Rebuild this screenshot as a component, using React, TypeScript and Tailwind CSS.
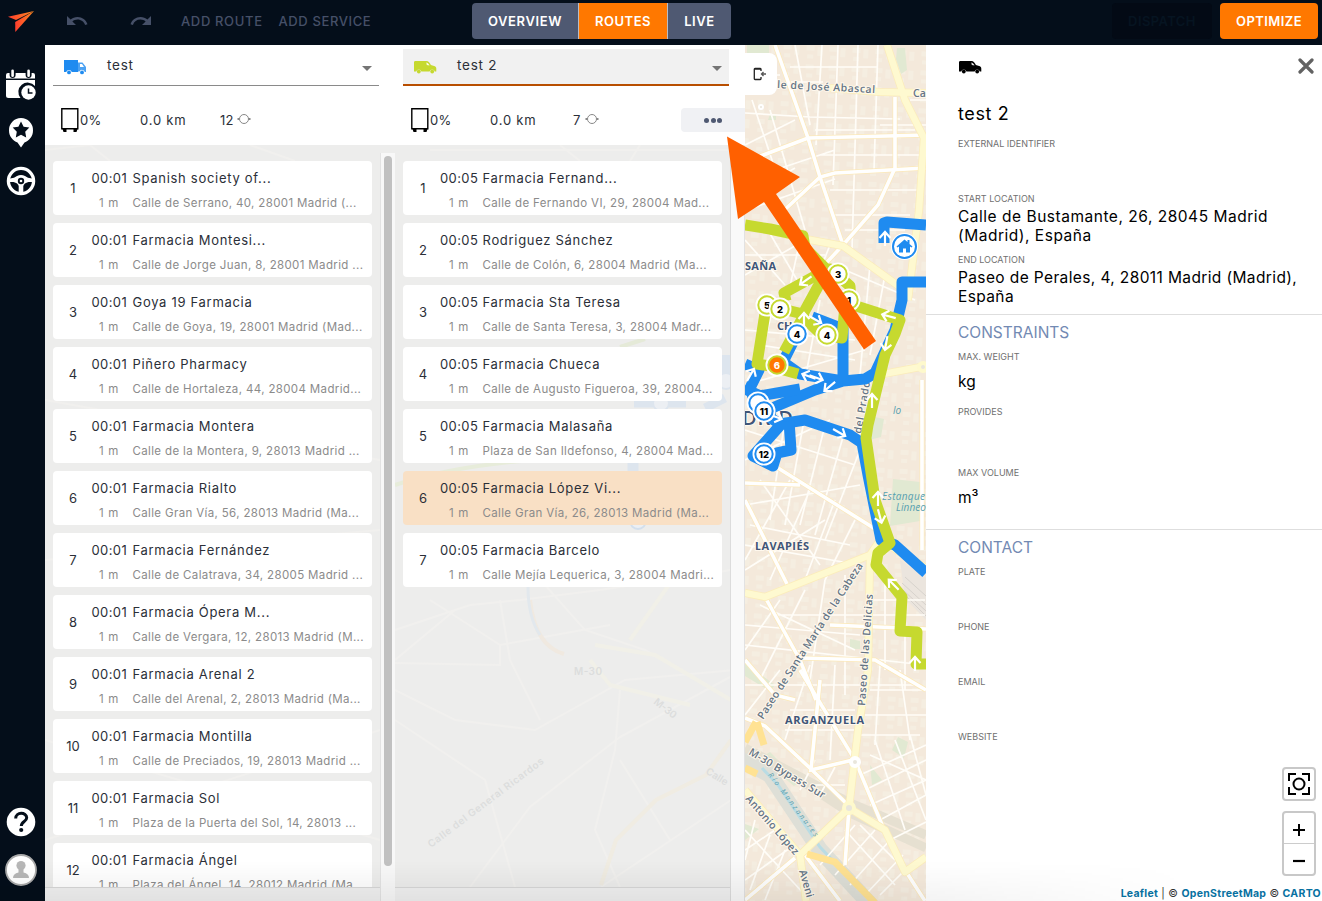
import React from "react";
import { MdUndo, MdRedo } from "react-icons/md";

type Stop = { name: string; address: string };

const firstRoute: Stop[] = [
  { name: "Spanish society of...", address: "Calle de Serrano, 40, 28001 Madrid (..." },
  { name: "Farmacia Montesi...", address: "Calle de Jorge Juan, 8, 28001 Madrid ..." },
  { name: "Goya 19 Farmacia", address: "Calle de Goya, 19, 28001 Madrid (Mad..." },
  { name: "Piñero Pharmacy", address: "Calle de Hortaleza, 44, 28004 Madrid..." },
  { name: "Farmacia Montera", address: "Calle de la Montera, 9, 28013 Madrid ..." },
  { name: "Farmacia Rialto", address: "Calle Gran Vía, 56, 28013 Madrid (Ma..." },
  { name: "Farmacia Fernández", address: "Calle de Calatrava, 34, 28005 Madrid ..." },
  { name: "Farmacia Ópera M...", address: "Calle de Vergara, 12, 28013 Madrid (M..." },
  { name: "Farmacia Arenal 2", address: "Calle del Arenal, 2, 28013 Madrid (Ma..." },
  { name: "Farmacia Montilla", address: "Calle de Preciados, 19, 28013 Madrid ..." },
  { name: "Farmacia Sol", address: "Plaza de la Puerta del Sol, 14, 28013 ..." },
  { name: "Farmacia Ángel", address: "Plaza del Ángel, 14, 28012 Madrid (Ma..." },
];

const secondRoute: Stop[] = [
  { name: "Farmacia Fernand...", address: "Calle de Fernando VI, 29, 28004 Mad..." },
  { name: "Rodriguez Sánchez", address: "Calle de Colón, 6, 28004 Madrid (Ma..." },
  { name: "Farmacia Sta Teresa", address: "Calle de Santa Teresa, 3, 28004 Madr..." },
  { name: "Farmacia Chueca", address: "Calle de Augusto Figueroa, 39, 28004..." },
  { name: "Farmacia Malasaña", address: "Plaza de San Ildefonso, 4, 28004 Mad..." },
  { name: "Farmacia López Vi...", address: "Calle Gran Vía, 26, 28013 Madrid (Ma..." },
  { name: "Farmacia Barcelo", address: "Calle Mejía Lequerica, 3, 28004 Madri..." },
];

function Truck() {
  return (
    <svg width="23" height="15" viewBox="0 0 23 15" className="block text-[#1f8bf0]">
      <path fill="currentColor" d="M0 0h14v12H7.800a3 3 0 0 0-5.600 0H0z" />
      <path fill="currentColor" opacity=".8" d="M14 2.500h4.500L22 7v5h-1.200a2.900 2.900 0 0 0-5.400-.5H14z" />
      <path fill="#fff" d="M16 4h2l2 3h-4z" />
      <circle cx="5" cy="12.400" r="1.900" fill="currentColor" />
      <circle cx="18" cy="12.400" r="1.900" fill="currentColor" />
    </svg>
  );
}

function Van({ className }: { className: string }) {
  return (
    <svg width="23" height="13" viewBox="0 0 23 13" className={className}>
      <path fill="currentColor" d="M0 .8 1 0h11.500c2 0 3.300 2.100 4.400 4l4 1.300c1 .5 1.400 1.200 1.400 2.400V10.500h-1.500a2.700 2.700 0 0 0-5.200 0H7.400a2.700 2.700 0 0 0-5.200 0H0z" />
      <path fill="#fff" d="M12.300 1.400c1.700.2 2.700 1.800 3.200 3l-2.700-.4z" opacity=".9" />
      <circle cx="4.800" cy="10.500" r="1.900" fill="currentColor" />
      <circle cx="18.200" cy="10.500" r="1.900" fill="currentColor" />
    </svg>
  );
}

function Sidebar() {
  return (
    <aside className="flex w-[45px] shrink-0 flex-col bg-[#040e1a]">
      <svg width="45" height="210" viewBox="0 0 45 210">
        <defs>
          <linearGradient id="brand" x1="0" x2="1" y1="0" y2="0">
            <stop offset="0" stopColor="#ff3d2e" />
            <stop offset="1" stopColor="#ff8a1f" />
          </linearGradient>
        </defs>
        <path fill="url(#brand)" d="M8 16.800 34 11 16 20z" />
        <path fill="url(#brand)" d="M34 11 15.300 32 15.200 22z" />
        <g fill="#fff">
          <path d="M6 80h29v6A9 9 0 0 0 20.500 98H8.500a2.500 2.500 0 0 1-2.500-2.500z" />
          <path d="M8 73h1.600v2a3 3 0 0 0 6 0v-2h10v2a3 3 0 0 0 6 0v-2H33q2 0 2 2v3.500H6V75q0-2 2-2z" />
          <rect x="11.300" y="69.500" width="2.600" height="7.500" rx="1.300" />
          <rect x="27.300" y="69.500" width="2.600" height="7.500" rx="1.300" />
          <circle cx="28.500" cy="92.500" r="7.200" />
          <path d="M21 118a12 12 0 0 1 12 12.500c0 6-4 10-8.500 12L21 147.500l-3.500-5C13 140.500 9 136.500 9 130.500A12 12 0 0 1 21 118z" />
        </g>
        <path d="M28.500 88.500V93h4" fill="none" stroke="#040e1a" strokeWidth="1.500" />
        <path fill="#040e1a" d="m21 121.500 2.600 5.300 5.700.8-4.100 4.100 1 5.700-5.200-2.700-5.200 2.700 1-5.700-4.100-4.100 5.700-.8z" />
        <circle cx="21" cy="181" r="12.600" fill="none" stroke="#fff" strokeWidth="3.300" />
        <path fill="#fff" d="M10 178.500q4.500-.2 7-2.500 4-2 8 0 2.500 2.300 7 2.500v3.500h-3.500q-4.500 1-5.200 4v7h-4.600v-7q-.7-3-5.200-4H10z" />
        <circle cx="21" cy="181" r="3.200" fill="#040e1a" />
        <circle cx="21" cy="181" r="1.300" fill="#fff" />
      </svg>
      <div className="mt-auto flex flex-col gap-[17px] pb-[15px] pl-[5px]">
        <svg width="32" height="30" viewBox="0 0 32 30">
          <circle cx="16" cy="15" r="14.300" fill="#fff" />
          <path d="M10.700 11.500c0-7 11-6.500 11-.8 0 4-5.400 3.500-5.400 8.300" fill="none" stroke="#040e1a" strokeWidth="3" />
          <circle cx="16.200" cy="23" r="2.100" fill="#040e1a" />
        </svg>
        <svg width="32" height="32" viewBox="0 0 32 32">
          <circle cx="16" cy="16" r="15" fill="#fff" stroke="#aaa" strokeWidth="1.800" />
          <circle cx="16" cy="11.500" r="4.600" fill="#b7b7b7" />
          <path d="M13.500 14h5v4.500q5.500 1 5.500 5.500H8q0-4.500 5.500-5.500z" fill="#b7b7b7" />
        </svg>
      </div>
    </aside>
  );
}

function Header() {
  return (
    <header className="flex h-[45px] shrink-0 items-start bg-[#040e1a] text-[13px] font-semibold">
      <div className="flex w-[427px] items-center pt-[9px] pl-5 text-[#465068]">
        <MdUndo size={24} />
        <MdRedo size={24} className="ml-10" />
        <span className="mt-[2px] ml-[28px] w-[97.5px] whitespace-nowrap font-medium tracking-[0.65px]">ADD ROUTE</span>
        <span className="mt-[2px] whitespace-nowrap font-medium tracking-[0.62px]">ADD SERVICE</span>
      </div>
      <nav className="mt-[3px] flex h-9 w-[259px] overflow-hidden rounded bg-[#4f5972] text-white">
        <span className="flex w-[106px] items-center justify-center pt-[2px] tracking-[0.6px]">OVERVIEW</span>
        <span className="flex w-[90px] items-center justify-center border-x border-[#b9bdc6] bg-[#ff7800] pt-[2px] tracking-[0.5px]">ROUTES</span>
        <span className="flex flex-1 items-center justify-center pt-[2px] tracking-[0.6px]">LIVE</span>
      </nav>
      <div className="mt-[3px] mr-1 ml-auto flex gap-2">
        <span className="flex h-9 w-[100px] items-center justify-center rounded bg-[#030a15] pt-[2px] tracking-[0.4px] text-[#061421]">DISPATCH</span>
        <span className="flex h-9 w-[98px] items-center justify-center rounded bg-[#ff7800] pt-[2px] tracking-[0.45px] text-white">OPTIMIZE</span>
      </div>
    </header>
  );
}

function RouteHead({ title, count, active }: { title: string; count: string; active?: boolean }) {
  return (
    <div className="flex h-[100px] w-[350px] shrink-0 flex-col pl-2 pt-1">
      <div className={active ? "flex h-[37px] w-[326px] border-b-2 border-[#b84e00] bg-[#f1f1f1]" : "flex h-[37px] w-[326px] border-b border-[#8a8a8a]"}>
        <div className="w-[54px] pl-[11px]">
          {active ? <Van className="mt-3 block text-[#c6d92f]" /> : <div className="mt-[11px]"><Truck /></div>}
        </div>
        <span className="mt-[7px] text-[13.5px] leading-[18px] tracking-[0.75px] text-[#2b2f38]">{title}</span>
        <svg width="10" height="5" viewBox="0 0 10 5" className="mt-[17px] mr-[7px] ml-auto"><path d="M0 0h10L5 5z" fill="#757575" /></svg>
      </div>
      <div className="mt-[22px] flex h-6 items-center text-[13px] tracking-[0.3px] text-[#2b2f38]">
        <svg width="19" height="25" viewBox="0 0 19 25" className="ml-2 shrink-0">
          <path d="M.8.800h16v20h-16z" fill="#fff" stroke="#000" strokeWidth="1.400" />
          <path d="M1.500 21h4v3h-3zM12.500 21h4l-1 3h-3z" />
        </svg>
        <span className="mt-[2px] w-[60px]">0%</span>
        <span className="mt-[2px] w-[80px] whitespace-nowrap tracking-[0.8px]">0.0 km</span>
        <span className={active ? "mt-[2px] w-[19px] pl-[3px]" : "mt-[2px] w-[19px]"}>{count}</span>
        <svg width="14" height="12" viewBox="0 0 14 12" className={active ? "-ml-1 mb-[2px]" : "-ml-[2px] mb-[2px]"}>
          <circle cx="7" cy="6" r="4.500" fill="none" stroke="#888" />
          <path d="M.5 6h2M11.500 6h2" stroke="#888" strokeWidth="2" />
        </svg>
        {active && (
          <span className="ml-auto flex h-6 w-16 items-center justify-center gap-[1.500px] rounded-l bg-[#f0f1f4]">
            <i className="size-[5px] rounded-full bg-[#4f5972]" />
            <i className="size-[5px] rounded-full bg-[#4f5972]" />
            <i className="size-[5px] rounded-full bg-[#4f5972]" />
          </span>
        )}
      </div>
    </div>
  );
}

function StopCard({ stop, index, time, selected }: { stop: Stop; index: number; time: string; selected?: boolean }) {
  return (
    <div className={selected ? "flex h-[54px] w-[319px] shrink-0 rounded bg-[#f9e0c5]" : "flex h-[54px] w-[319px] shrink-0 rounded bg-white"}>
      <span className="flex w-10 items-center justify-center pt-[2px] text-[13px] text-[#2b2f38]">{index}</span>
      <div className="flex flex-col pt-[8px] whitespace-nowrap">
        <div className="flex h-[19px] items-center text-[13px] text-[#2b2f38]">
          <span className={time === "00:05" ? "-ml-[3px] w-[42.5px] tracking-[0.4px]" : "-ml-[1.5px] w-[41px] tracking-[0.4px]"}>{time}</span>
          <span className="tracking-[0.7px]">{stop.name}</span>
        </div>
        <div className="mt-[7px] flex h-[18px] items-center text-[11.500px] text-[#8b8b8b]">
          <span className="ml-[6px] w-[33.500px] tracking-[0.7px]">1 m</span>
          <span className="tracking-[0.36px]">{stop.address}</span>
        </div>
      </div>
    </div>
  );
}

function FadedMap() {
  return (
    <svg width="700" height="756" viewBox="45 145 700 756" className="absolute inset-0">
      <rect x="45" y="145" width="700" height="756" fill="#ededec" />
      <g fill="none" stroke="#f1f0ee" strokeWidth="2">
        <path d="M395 630 470 605 520 600 600 590 731 570M395 660l60-50M430 600l70 45 0 20-106-2M500 600l10 60 30 60M500 645l110-20M505 540l80 90 60 20 86 50M395 690l60 30 80 10 90-50 110-10M470 887l60-80 90-70 110-60M395 720l90 60 30 107M620 690l-5 60-20 80 25 57M731 800l-130 87M620 760l50 80" />
        <path d="M45 150l45-5 20 16M250 145l45 16M45 840l335-110M45 400l335 60M45 560l335-30M45 740l335 100M430 150h300M560 145l20 16M640 145l-10 16" />
      </g>
      <g fill="none" strokeWidth="4">
        <path d="M395 485q60-20 150-26" stroke="#e7ecda" />
        <path d="M620 347l25-8" stroke="#e5ead8" />
        <path d="M530 600q5 46 34 54" stroke="#f0e9e0" />
        <path d="M528 587q0 30 12 48" stroke="#e2e8ed" strokeWidth="3" />
        <path d="M731 740l-25 35-50 25-40 40-15 45" stroke="#f0ece2" />
        <path d="M595 645l60 10 76 45M630 640l60-85M590 660l20 25 80 20" stroke="#f1f0e8" />
        <path d="M633 462v9M634 402h52" stroke="#dde5ee" strokeWidth="11" />
        <path d="M726 355v30" stroke="#dde5ee" strokeWidth="9" />
        <path d="M705 408l20-10" stroke="#dde5ee" strokeWidth="9" />
      </g>
      <circle cx="661" cy="403" r="8" fill="#eceff3" stroke="#dde5ee" strokeWidth="2" />
      <circle cx="638" cy="521" r="8" fill="#eceff3" stroke="#d3dfec" strokeWidth="2" />
      <circle cx="726" cy="381" r="8" fill="#eceff3" stroke="#dde5ee" strokeWidth="2" />
      <g fill="#dcdddd" fontSize="10" fontWeight="600">
        <text x="574" y="675" textLength="28">M-30</text>
        <text transform="translate(653 703) rotate(38)" textLength="26">M-30</text>
        <text transform="translate(431 848) rotate(-37)" textLength="142">Calle del General Ricardos</text>
        <text transform="translate(705 773) rotate(32)">Calle</text>
      </g>
    </svg>
  );
}

function RoutesPanel() {
  return (
    <section className="flex w-[700px] shrink-0 flex-col bg-white">
      <div className="flex h-[100px]">
        <RouteHead title="test" count="12" />
        <RouteHead title="test 2" count="7" active />
      </div>
      <div className="relative flex-1 overflow-hidden">
        <FadedMap />
        <div className="relative flex h-full">
          <div className="flex w-[335px] flex-col">
            <div className="flex h-[743px] flex-col gap-2 overflow-hidden border-b border-[#d8d8d8] pt-4 pl-2">
              {firstRoute.map((stop, i) => <StopCard key={stop.name} stop={stop} index={i + 1} time="00:01" />)}
            </div>
            <div className="flex-1 bg-[#f1f1f1]" />
          </div>
          <div className="mt-2 flex w-[15px] border-l border-[#e3e3e3] bg-[#f8f8f8] pt-[3px] pl-[3px]">
            <div className="h-[710px] w-2 rounded-full bg-[#c1c1c1]" />
          </div>
          <div className="flex w-[336px] flex-col border-r border-[#dcdcdc]">
            <div className="flex h-[743px] flex-col gap-2 overflow-hidden border-b border-[#d8d8d8] pt-4 pl-2">
              {secondRoute.map((stop, i) => <StopCard key={stop.name} stop={stop} index={i + 1} time="00:05" selected={i === 5} />)}
            </div>
            <div className="flex-1 bg-[#f1f1f1]" />
          </div>
          <div className="mt-2 flex-1 border-r border-[#e2e2e2] bg-[#f9f9f9]" />
        </div>
      </div>
    </section>
  );
}

const mainRoads = [
  "M775 45 808 138 820 177 843 245",
  "M745 162 808 138 926 135",
  "M779 215 820 177 835 173 926 168",
  "M895 97V168L878 205 843 245 815 275",
  "M745 483 800 485M778 468 880 532",
  "M765 597 800 660 816 700",
  "M745 660l30 35 20 5M830 625l96 4M800 658l75 2 51 30",
  "M800 670 855 760 885 832",
  "M745 718 765 726 812 770 848 805",
  "M820 680 811 770 853 760",
  "M849 808 845 865",
  "M745 900 795 858M805 855 840 901M905 870l20 31",
  "M922 380V550M745 500l45 90",
];

const yellowRoads = [
  "M887 45 905 100 924 138 919 210 908 300",
  "M830 88 880 92 926 93",
  "M745 224 800 238 843 246 900 287",
  "M878 375 926 366",
  "M745 593 765 597 870 555 880 540 926 568",
  "M870 555 868 670 858 730 849 808 800 855 806 901",
  "M745 790 800 855M849 808 885 830 905 872 926 857",
];

const smallStreets = [
  "M745 75h35M790 67h88M788 82h35M745 113l65 4 90 2M745 145l50-25M822 45l-6 100M858 45l-6 205M878 45l-4 125M795 45l15 80M838 45l-5 140M752 100l25 75M770 110l35 120M745 180l90-30M755 207l80-28M745 198l50-30M815 130h100M820 155h100M830 190h90M835 215h75M845 230h60M910 100h16M880 125h46",
  "M745 240l40 45M745 255h80M745 275l60-35M765 225l35 60M800 240l-15 70M830 245l-30 75M870 265l-10 110M885 275l-15 80M845 270l70 30M815 285l75 35M745 330l110 10M760 345l95 15M820 300l-15 80M775 300l-20 80M745 385l120-35",
  "M745 430l110 35M745 460l85-40M785 420l-15 100M805 415l-20 110M825 425l-25 100M845 430l-30 105M860 450l-35 90M745 505l115-20M750 525l100 20M745 545l115 20M760 480l60 85M790 480l-45 80M810 490l-40 90M835 500l-30 80M855 520l-30 60M745 570l80-50",
  "M760 605l95 45M780 600l-35 50M805 590l-45 90M825 580l-15 100M845 575v120M885 580v90M905 600v90M745 625l115 10M745 645l180 20M775 615h150M865 600h60M745 685h170M780 670l-35 45M810 665l-25 75M835 665l-5 95M880 665l-5 80M900 670l10 70M870 690h56M865 715h61M860 735h60M790 710h65M785 730h70",
  "M870 755l56 25M860 775l66-30M865 790l61-30M870 805l56-25M880 820l46-25M890 840l36-18M875 740l30 90M895 740l31 80M910 735l16 60M800 790l15-30M820 795l15-28M810 785h35M745 830l60 65M755 820l-10 40M770 835l-20 55M785 850l-20 50M820 865l35-40M835 875l40-45M850 885l40-45M865 895l38-40M845 830l50 55M860 825l35 35M880 895l25-25M745 850l30-20M745 880l45-32",
];

const blueRoutes = [
  "M884 243 884 223 887 222 926 225",
  "M926 282H902V300L895 330 875 373 865 379 843 381 815 390 765 411",
  "M812 317 843 329V381M797 334 783 362 800 374 843 381",
  "M745 364 759 370 750 388 753 397 800 389",
  "M745 389 765 398M763 413 780 424 805 420 850 435 862 443 868 475 881 540 895 545 926 573",
  "M784 421 753 456 773 466 777 453 791 450 789 421",
];

const greenRoutes = [
  "M745 225 770 229 803 236 805 248 825 268",
  "M786 301 784 293 815 276 830 269 850 286 851 304",
  "M827 270 803 314 778 308 760 309",
  "M765 313 757 364 770 366 798 374M784 352 803 317 822 335 842 338 845 305",
  "M850 304 900 320 895 334 885 355 868 425 866 438 875 500 890 543 878 553 876 565 902 597 900 631 917 632 916 664 926 664",
];

const arrows: [number, number, number][] = [
  [885, 238, 0], [805, 281, 235], [816, 320, 120], [804, 319, 0], [888, 316, 285], [886, 344, 190],
  [872, 400, 0], [829, 387, 230], [817, 378, 110], [808, 376, 290], [840, 433, 120], [776, 417, 110], [878, 498, 0], [880, 517, 165],
  [893, 584, 315], [915, 663, 0], [751, 374, 30],
];

function Marker({ x, y, label, color, selected }: { x: number; y: number; label?: string; color: string; selected?: boolean }) {
  return (
    <g>
      <circle cx={x} cy={y} r="11.500" fill="#fff" />
      <circle cx={x} cy={y} r="8.700" fill={selected ? "#ff7800" : "#fff"} stroke={color} strokeWidth="2" />
      {label && <text x={x} y={y + 3.500} textAnchor="middle" fontSize="9.500" fontWeight="800" fill={selected ? "#fff" : "#000"}>{label}</text>}
    </g>
  );
}

function CityMap() {
  return (
    <section className="relative w-[181px] shrink-0 overflow-hidden">
      <svg width="181" height="856" viewBox="745 45 181 856" className="block">
        <defs>
          <pattern id="blocks" width="23" height="19" patternUnits="userSpaceOnUse" patternTransform="rotate(3)">
            <path d="M3 3h8v5H3zM14 4h5v9h-5zM4 12h6v4H4z" fill="#f5eee1" />
          </pattern>
        </defs>
        <rect x="745" y="45" width="181" height="856" fill="#f4e9db" />
        <rect x="745" y="45" width="181" height="856" fill="url(#blocks)" />
        <g fill="#e1e9d2">
          <path d="M747 45h22v12h-22zM897 48h8l2 22-6 4-5-15zM893 479l27 3v39l-30 5zM770 114l6 2v4h-8zM866 415l18 4-3 18-12 3zM745 663l30 22-5 6-25-15zM770 752l30 30-6 4-34-28zM870 765l12 15-10 5zM898 737l10 5-4 16-12-8zM850 639l10 2v8h-10zM745 824l14 5-14 11z" />
        </g>
        <path d="M745 755 800 780 850 813 926 848M745 748 850 803 926 835" fill="none" stroke="#e6e0d1" strokeWidth="9" />
        <path d="M900 560 926 578V620L905 598z" fill="#ebe5de" />
        <path d="M905 577 926 596M902 583 926 605M903 590 926 611M906 596 926 616" stroke="#d7d2cc" />
        <path d="M738 758 770 775 820 850 880 915" fill="none" stroke="#dedfd7" strokeWidth="16" />
        <path d="M762 768 778 785 820 847 875 905" fill="none" stroke="#b9dce4" strokeWidth="3" />
        <g fill="none" stroke="#fffdf8" strokeWidth="1.700">{smallStreets.map((d) => <path key={d} d={d} />)}</g>
        <g fill="none" stroke="#fce9b9" strokeWidth="5">{mainRoads.map((d) => <path key={d} d={d} />)}</g>
        <g fill="none" stroke="#fff" strokeWidth="3.600">{mainRoads.map((d) => <path key={d} d={d} />)}</g>
        <g fill="none" stroke="#fbecba" strokeWidth="8" strokeLinejoin="round">{yellowRoads.map((d) => <path key={d} d={d} />)}</g>
        <g fill="none" stroke="#fef9d0" strokeWidth="6.500" strokeLinejoin="round">{yellowRoads.map((d) => <path key={d} d={d} />)}</g>
        <path d="M745 742 756 722M757 722 764 745M807 854 835 862 875 903M745 768l12 6" fill="none" stroke="#ffe293" strokeWidth="7" />
        <g fill="#e9e6dc" stroke="#fef9cc" strokeWidth="4"><circle cx="849" cy="808" r="5" /><circle cx="923" cy="367" r="4" /><circle cx="855" cy="762" r="4" stroke="#fff" /><circle cx="761" cy="107" r="2" stroke="#fff" strokeWidth="2" /></g>
        <g fill="#657585" stroke="#fff8ed" strokeWidth="2" paintOrder="stroke" fontSize="10.500" fontWeight="600" fontFamily="'Open Sans', sans-serif">
          <text transform="translate(777 88) rotate(3)" textLength="98">le de José Abascal</text>
          <text x="913" y="97">Ca</text>
          <text transform="translate(861 434) rotate(-80)" textLength="53">del Prado</text>
          <text transform="translate(763 720) rotate(-57)" textLength="184">Paseo de Santa María de la Cabeza</text>
          <text transform="translate(865 706) rotate(-86)" textLength="112">Paseo de las Delicias</text>
          <text transform="translate(748 754) rotate(31)" textLength="87">M-30 Bypass Sur</text>
          <text transform="translate(745 799) rotate(49)" textLength="75">Antonio López</text>
          <text transform="translate(799 871) rotate(74)">Aveni</text>
        </g>
        <g fill="#405578" stroke="#fff8ed" strokeWidth="2" paintOrder="stroke" fontSize="11" fontWeight="700" fontFamily="'Open Sans', sans-serif">
          <text x="745" y="270" textLength="31">SAÑA</text>
          <text x="777" y="330">CH</text>
          <text x="755" y="550" textLength="54">LAVAPIÉS</text>
          <text x="785" y="724" textLength="79">ARGANZUELA</text>
          <text x="742" y="425" fontSize="20" fontWeight="600" textLength="51">DRID</text>
        </g>
        <g fill="#58a0b0" fontSize="10" fontStyle="italic" fontFamily="'Open Sans', sans-serif">
          <text x="882" y="500" textLength="43">Estanque</text><text x="896" y="511" textLength="30">Linneo</text><text x="893" y="414">lo</text>
          <text transform="translate(768 775) rotate(53)" fontSize="7" textLength="78">Río Manzanares</text>
        </g>
        <g fill="none" stroke="#1f8bf0" strokeWidth="11" strokeLinejoin="round">{blueRoutes.map((d) => <path key={d} d={d} />)}</g>
        <g fill="none" stroke="#c6d92f" strokeWidth="11" strokeLinejoin="round">{greenRoutes.map((d) => <path key={d} d={d} />)}</g>
        <g fill="none" stroke="#fff" strokeWidth="2.200">
          {arrows.map(([x, y, a]) => <path key={`${x}-${y}`} transform={`translate(${x} ${y}) rotate(${a})`} d="M0 8V-6M-5.500 0 0-6 5.500 0" />)}
        </g>
        <Marker x={838} y={274} label="3" color="#c6d92f" />
        <Marker x={849} y={300} label="1" color="#c6d92f" />
        <Marker x={767} y={305} label="5" color="#c6d92f" />
        <Marker x={780} y={309} label="2" color="#c6d92f" />
        <Marker x={797} y={334} label="4" color="#1f8bf0" />
        <Marker x={827} y={335} label="4" color="#c6d92f" />
        <Marker x={777} y={365} label="6" color="#c6d92f" selected />
        <Marker x={758} y={403} color="#1f8bf0" />
        <Marker x={764} y={411} label="11" color="#1f8bf0" />
        <Marker x={764} y={454} label="12" color="#1f8bf0" />
        <circle cx="904.500" cy="246.500" r="13.500" fill="#fff" />
        <circle cx="904.500" cy="246.500" r="11.500" fill="#fff" stroke="#1f8bf0" strokeWidth="2" />
        <path d="m896.500 246.500 8-7 3 2.500v-2h2v4l3 2.500-1 1-1.500-1v6h-4v-4h-3v4h-4v-6l-1.500 1z" fill="#1f8bf0" />
      </svg>
      <div className="absolute top-2 left-0 flex h-[42px] w-8 items-center justify-center rounded-r-lg bg-white">
        <svg width="14" height="14" viewBox="0 0 14 14" className="mr-[3px]" fill="none" stroke="#222" strokeWidth="1.300">
          <path d="M8 4V2.200Q8 1.500 7.300 1.500H2Q1.300 1.500 1.300 2.200v9.600q0 .7.700.7h5.300q.7 0 .7-.7V10M1 2h7" />
          <path d="M8.500 7H13M10.500 5 8.500 7l2 2" stroke="#555" />
        </svg>
      </div>
    </section>
  );
}

function Label({ children, className }: { children: React.ReactNode; className: string }) {
  return <div className={`text-[9px] leading-3 text-[#707070] ${className}`}><span className="relative top-[0.5px]">{children}</span></div>;
}

function Details() {
  return (
    <section className="relative flex flex-1 flex-col bg-white text-black">
      <div className="flex h-[270px] shrink-0 flex-col border-b border-[#dedede] pl-8">
        <div className="flex justify-between pt-[14px] pr-2">
          <Van className="mt-[2px] ml-[0.5px] block text-black" />
          <svg width="16" height="16" viewBox="0 0 16 16" className="-mt-px"><path d="m2 2 12 12m0-12-12 12" stroke="#626262" strokeWidth="3.200" strokeLinecap="round" /></svg>
        </div>
        <h2 className="mt-[29px] text-[18px] leading-[22px] tracking-[0.6px]">test 2</h2>
        <Label className="mt-3">EXTERNAL IDENTIFIER</Label>
        <Label className="mt-[43px]">START LOCATION</Label>
        <p className="mt-[3px] text-[15.500px] leading-[19px] tracking-[0.52px]">Calle de Bustamante, 26, 28045 Madrid<br />(Madrid), España</p>
        <Label className="mt-2">END LOCATION</Label>
        <p className="mt-[3px] text-[15.500px] leading-[19px] tracking-[0.38px] whitespace-nowrap">Paseo de Perales, 4, 28011 Madrid (Madrid),<br />España</p>
      </div>
      <div className="flex h-[215px] shrink-0 flex-col border-b border-[#dedede] pl-8">
        <h3 className="mt-2 text-[15.500px] leading-5 text-[#738ab3]">CONSTRAINTS</h3>
        <Label className="mt-[7px]">MAX. WEIGHT</Label>
        <span className="mt-[10px] text-[15.500px] leading-5">kg</span>
        <Label className="mt-[13px]">PROVIDES</Label>
        <Label className="mt-[49px]">MAX VOLUME</Label>
        <span className="mt-[10px] text-[15.500px] leading-5">m³</span>
      </div>
      <div className="flex flex-col pl-8">
        <h3 className="mt-2 text-[15.500px] leading-5 text-[#738ab3]">CONTACT</h3>
        <Label className="mt-[7px]">PLATE</Label>
        <Label className="mt-[43px]">PHONE</Label>
        <Label className="mt-[43px]">EMAIL</Label>
        <Label className="mt-[43px]">WEBSITE</Label>
      </div>
      <div className="mt-auto mr-[6px] mb-[10px] flex flex-col gap-[10px] self-end">
        <div className="flex h-[34px] w-[34px] items-center justify-center rounded border-2 border-[#c8c8c8]">
          <svg width="22" height="22" viewBox="0 0 22 22" fill="none" stroke="#000" strokeWidth="2"><circle cx="11" cy="11" r="5.500" /><path d="M1 8V1h7M14 1h7v7M21 14v7h-7M8 21H1v-7" /></svg>
        </div>
        <div className="flex h-[65px] w-[34px] flex-col rounded border-2 border-[#c8c8c8]">
          <div className="flex flex-1 items-center justify-center border-b border-[#ccc]"><svg width="12" height="12" className="mt-1" stroke="#000" strokeWidth="2"><path d="M6 0v12M0 6h12" /></svg></div>
          <div className="flex flex-1 items-center justify-center"><svg width="12" height="4" className="mt-1" stroke="#000" strokeWidth="2.200"><path d="M0 2h12" /></svg></div>
        </div>
      </div>
      <p className="mr-px h-[15px] pt-px text-right text-[10.500px] leading-[14px] tracking-[0.28px] whitespace-nowrap text-[#333]">
        <b className="text-[#0871a1]">Leaflet</b> | © <b className="text-[#0871a1]">OpenStreetMap</b> © <b className="text-[#0871a1]">CARTO</b>
      </p>
    </section>
  );
}

export default function App() {
  return (
    <div className="relative flex h-[901px] w-[1322px] overflow-hidden bg-white font-['Inter',sans-serif]">
      <Sidebar />
      <div className="flex min-w-0 flex-1 flex-col">
        <Header />
        <main className="flex min-h-0 flex-1">
          <RoutesPanel />
          <CityMap />
          <Details />
        </main>
      </div>
      <svg className="pointer-events-none absolute top-[136px] left-[727px]" width="150" height="214" viewBox="727 136 150 214">
        <path d="M727 136.500 800 177 776 194 876 341 864 349.500 764 202 738 219z" fill="#ff6000" />
      </svg>
      <div className="pointer-events-none absolute bottom-0 left-0 h-10 w-[1200px] bg-linear-to-t from-black/6 to-transparent mask-r-from-70% mask-r-to-100%" />
    </div>
  );
}
